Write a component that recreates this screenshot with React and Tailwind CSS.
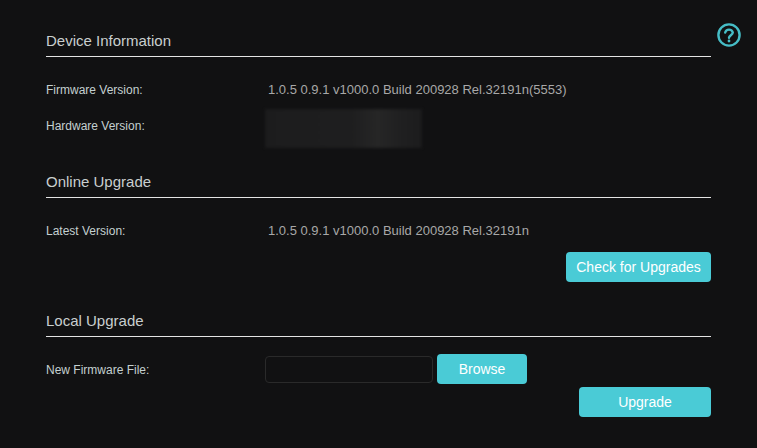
const font = "[font-family:'Liberation_Sans',Arial,sans-serif]";

function SectionTitle({ children }) {
  return (
    <div className="flex h-[32px] items-center border-b border-[#e4e4e4] text-[15px] leading-none text-[#c9cfcf]">
      {children}
    </div>
  );
}

function Row({ label, className = "", labelClass = "", children }) {
  return (
    <div className={`flex ${className}`}>
      <div className={`w-[219px] shrink-0 text-[12px] text-[#c4d0d0] ${labelClass}`}>{label}</div>
      {children}
    </div>
  );
}

function Value({ children }) {
  return <div className="pl-[3px] text-[13px] text-[#a8a8a8]">{children}</div>;
}

function TealButton({ className = "", children }) {
  return (
    <button
      type="button"
      className={`h-[30px] rounded-[4px] bg-[#4acbd6] text-[14px] text-white ${className}`}
    >
      {children}
    </button>
  );
}

export default function App() {
  return (
    <div className={`relative h-[448px] w-[757px] overflow-hidden bg-[#111112] px-[46px] pt-[25px] ${font}`}>
      <svg
        viewBox="0 0 24 24"
        fill="none"
        className="absolute left-[717px] top-[23px] h-[24px] w-[24px] text-[#46bdc6]"
        stroke="currentColor"
        strokeLinecap="round"
      >
        <circle cx="12" cy="12" r="10.6" strokeWidth="2.4" />
        <path d="M8.2 9.6a3.9 3.9 0 0 1 7.6 0c0 2.5-3.8 2.9-3.8 5.2" strokeWidth="2.4" />
        <circle cx="12" cy="18" r="0.7" strokeWidth="1.4" />
      </svg>

      <div className="w-[665px]">
        <SectionTitle>Device Information</SectionTitle>
        <Row label="Firmware Version:" className="mt-[23px] h-[20px] items-center">
          <Value>1.0.5 0.9.1 v1000.0 Build 200928 Rel.32191n(5553)</Value>
        </Row>
        <Row label="Hardware Version:" className="mt-[9px] h-[39px] items-start" labelClass="pt-[8px]">
          <div className="h-[39px] w-[157px] bg-[linear-gradient(90deg,#1c1c1d_0%,#1e1e1f_55%,#262626_72%,#1f1f20_88%,#1c1c1d_100%)] blur-[1.5px]" />
        </Row>

        <div className="mt-[18px]">
          <SectionTitle>Online Upgrade</SectionTitle>
        </div>
        <Row label="Latest Version:" className="mt-[23px] h-[20px] items-center">
          <Value>1.0.5 0.9.1 v1000.0 Build 200928 Rel.32191n</Value>
        </Row>
        <div className="mt-[11px] flex justify-end">
          <TealButton className="w-[145px]">Check for Upgrades</TealButton>
        </div>

        <div className="mt-[23px]">
          <SectionTitle>Local Upgrade</SectionTitle>
        </div>
        <Row label="New Firmware File:" className="mt-[17px] h-[30px] items-center" labelClass="pt-[1px]">
          <div className="flex items-center gap-[4px]">
            <input
              type="text"
              className="h-[27px] w-[168px] rounded-[4px] border border-[#2a2a2a] bg-[#111112] outline-none"
            />
            <TealButton className="w-[90px]">Browse</TealButton>
          </div>
        </Row>
        <div className="mt-[3px] flex justify-end">
          <TealButton className="w-[132px]">Upgrade</TealButton>
        </div>
      </div>
    </div>
  );
}
